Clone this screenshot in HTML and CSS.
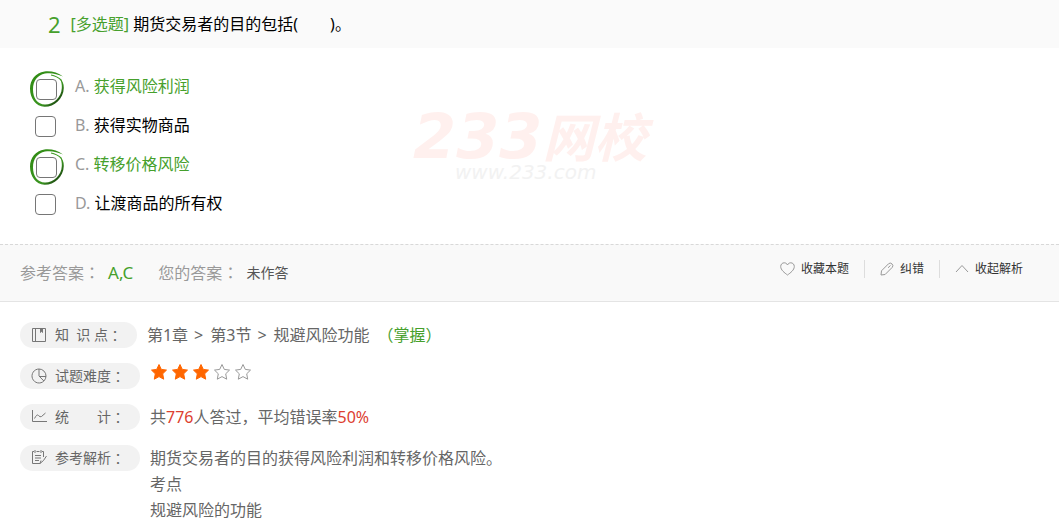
FILE: index.html
```html
<!DOCTYPE html>
<html lang="zh-CN">
<head>
<meta charset="utf-8">
<title>期货交易者的目的</title>
<link rel="stylesheet" href="styles.css">
</head>
<body>
<svg class="defs" aria-hidden="true">
  <defs>
    <linearGradient id="ink" x1="0" y1="0" x2="1" y2="1">
      <stop offset="0" stop-color="#2f8a12"/>
      <stop offset="0.65" stop-color="#3a9420"/>
      <stop offset="0.85" stop-color="#1c4a10"/>
      <stop offset="1" stop-color="#3a9420"/>
    </linearGradient>
    <symbol id="ring" viewBox="0 0 36 38">
      <path fill="url(#ink)" d="M34 6.500C29 2.500 22 .6 15.500 1.400C6.500 2.600 1 10 1 18.500C1 28.500 7 36.500 15.500 36.800C25 37 34.500 29 34.800 18C34.900 14 33.500 10.500 31 8.500C32.500 12 33 15 32.800 18C32.500 27.500 24.500 34.600 16 34.500C8.500 34.400 4 28 4 19.500C4 11 8.500 5 16 3.600C22 2.500 28 3.900 34 6.500Z"/>
      <path fill="none" stroke="#3f9a22" stroke-width="1.200" d="M22 5Q28 6 32.500 10.500"/>
    </symbol>
    <symbol id="star" viewBox="0 0 18 18">
      <path d="M9 1.500l2.300 4.900 5.200.7-3.800 3.700 1 5.400L9 13.600l-4.700 2.600 1-5.400L1.500 7.100l5.200-.7z"/>
    </symbol>
  </defs>
</svg>

<main>
  <header class="question">
    <span class="number">2</span>
    <h1 class="stem"><span class="green">[多选题]</span> 期货交易者的目的包括(&#12288;&#12288;)。</h1>
  </header>

  <section class="options">
    <ul class="choices">
      <li class="choice correct">
        <span class="tick"><input type="checkbox" id="a"><svg class="ring"><use href="#ring"/></svg></span>
        <label for="a"><span class="letter">A.</span> 获得风险利润</label>
      </li>
      <li class="choice">
        <span class="tick"><input type="checkbox" id="b"></span>
        <label for="b"><span class="letter">B.</span> 获得实物商品</label>
      </li>
      <li class="choice correct">
        <span class="tick"><input type="checkbox" id="c"><svg class="ring"><use href="#ring"/></svg></span>
        <label for="c"><span class="letter">C.</span> 转移价格风险</label>
      </li>
      <li class="choice">
        <span class="tick"><input type="checkbox" id="d"></span>
        <label for="d"><span class="letter">D.</span> 让渡商品的所有权</label>
      </li>
    </ul>
    <div class="watermark">
      <div class="brand"><span class="digits">233</span><span class="school">网校</span></div>
      <div class="site">www.233.com</div>
    </div>
  </section>

  <section class="answers">
    <div class="results">
      <span class="caption">参考答案<span class="mid" lang="zh-TW">：</span></span><span class="key">A,C</span>
      <span class="caption yours">您的答案<span class="mid" lang="zh-TW">：</span></span><span class="mine">未作答</span>
    </div>
    <div class="actions">
      <button type="button" class="action"><svg width="16" height="14" viewBox="0 0 16 14"><path d="M7.500 13C4.500 10.800.7 8 .7 4.500C.7 2.300 2.300.8 4.200.8C5.700.8 6.900 1.600 7.500 3C8.100 1.600 9.300.8 10.800.8C12.700.8 14.300 2.300 14.300 4.500C14.300 8 10.500 10.800 7.500 13Z"/></svg>收藏本题</button>
      <button type="button" class="action"><svg width="15" height="14" viewBox="0 0 15 14"><path d="M1 13L1.500 8.800L8.500 1.800Q10.200.2 12 1.900Q13.800 3.700 12.200 5.400L5.100 12.500L1 13M8 5.800L10.500 3.500"/></svg>纠错</button>
      <button type="button" class="action"><svg width="14" height="14" viewBox="0 0 14 14"><path d="M1 10L7 3.500L13 10"/></svg>收起解析</button>
    </div>
  </section>

  <section class="details">
    <div class="row">
      <h2 class="pill"><svg width="16" height="16" viewBox="0 0 16 16"><path d="M1.500 1.500H14.500V14.500H1.500ZM4.500 1.500V14.500M9.500 1.500V5.500L10.500 4.500L11.500 5.500V1.500M10.500 1.500V4.500"/></svg>知&nbsp;&nbsp;识&nbsp;点<span class="mid" lang="zh-TW">：</span></h2>
      <p class="value chapter">第1章<span class="sep">&gt;</span>第3节<span class="sep">&gt;</span>规避风险功能<span class="green level" lang="zh-TW">（掌握）</span></p>
    </div>
    <div class="row">
      <h2 class="pill"><svg width="16" height="16" viewBox="0 0 16 16"><path d="M8 1A7 7 0 1 0 12.900 13A7 7 0 0 0 15 8A7 7 0 0 0 8 1V8L12.900 13M8 8.500H15"/></svg>试题难度<span class="mid" lang="zh-TW">：</span></h2>
      <div class="stars" role="img" aria-label="3/5">
        <svg class="on"><use href="#star"/></svg><svg class="on"><use href="#star"/></svg><svg class="on"><use href="#star"/></svg><svg><use href="#star"/></svg><svg><use href="#star"/></svg>
      </div>
    </div>
    <div class="row">
      <h2 class="pill"><svg width="16" height="16" viewBox="0 0 16 16"><path d="M1.500 1V12.500H16M3.500 9.500Q6 4.500 7.500 6.500T10.500 7.500L14.500 4"/></svg>统&#12288;&#12288;计<span class="mid" lang="zh-TW">：</span></h2>
      <p class="value">共<span class="red">776</span>人答过，平均错误率<span class="red">50%</span></p>
    </div>
    <div class="row">
      <h2 class="pill"><svg width="16" height="16" viewBox="0 0 16 16"><path d="M3 1.500H1.500V13.500H9L12.500 10.500L15.500 6M11 1.500H12.500V7M4 0V3M10 0V3M5.500 1.500H8.500M4 5.500H10M4 8H10M4 10.500H8M9 13.500L10 10.500"/></svg>参考解析<span class="mid" lang="zh-TW">：</span></h2>
      <p class="value">期货交易者的目的获得风险利润和转移价格风险。<br>考点<br>规避风险的功能</p>
    </div>
  </section>
</main>
</body>
</html>
```

FILE: styles.css
```css
* {
  box-sizing: border-box;
}

body {
  margin: 0;
  background: #fff;
  color: #000;
  font: 400 16px/26px "Noto Sans", "Noto Sans CJK SC", sans-serif;
}

h1, h2, p, ul {
  margin: 0;
  padding: 0;
  font-weight: inherit;
}

.defs {
  display: block;
  width: 0;
  height: 0;
}

.green {
  color: #46a02c;
}

.red {
  color: #dd4030;
}

.mid {
  font-family: "Noto Sans CJK TC", sans-serif;
  line-height: 1;
}

.question {
  display: flex;
  align-items: center;
  gap: 10px;
  height: 48px;
  padding: 0 48px;
  background: #fafafa;
}

.number {
  color: #46a02c;
  font-size: 22px;
}

.stem {
  font-size: 16px;
}

.options {
  display: grid;
  grid-template-columns: 413px 1fr;
  padding: 20px 0;
}

.choices {
  list-style: none;
  padding-left: 35px;
}

.choice {
  display: flex;
  align-items: center;
  gap: 19px;
  height: 39px;
}

.choice label {
  padding-bottom: 3px;
}

.letter {
  color: #999;
}

.correct {
  color: #46a02c;
}

.tick {
  position: relative;
  display: flex;
}

.tick input {
  appearance: none;
  width: 21px;
  height: 21px;
  margin: 0;
  border: 1px solid #767676;
  border-radius: 4px;
  background: #fff;
}

.correct .tick {
  padding: 3px 0 0 1px;
  margin-right: -1px;
}

.ring {
  position: absolute;
  left: -6px;
  top: -6px;
  width: 36px;
  height: 38px;
  pointer-events: none;
}

.watermark {
  padding-top: 43px;
  font-style: italic;
  color: #fff0ee;
}

.brand {
  display: flex;
  align-items: center;
  height: 52px;
  font-weight: 700;
  line-height: 52px;
  white-space: nowrap;
}

.digits {
  font-family: "DejaVu Sans", sans-serif;
  font-size: 62px;
}

.school {
  padding-bottom: 4px;
  font-family: "Noto Sans CJK SC", sans-serif;
  font-size: 52px;
}

.site {
  padding-left: 42px;
  color: #f2f2f2;
  font: italic 20px/18px "DejaVu Sans", sans-serif;
}

.answers {
  display: flex;
  justify-content: space-between;
  height: 58px;
  padding: 0 36px 0 20px;
  border-top: 1px dashed #d8d8d8;
  border-bottom: 1px solid #e4e4e4;
  background: #f9f9f9;
}

.results {
  display: flex;
  align-items: center;
  gap: 8px;
}

.caption {
  color: #999;
}

.yours {
  margin-left: 17px;
}

.key {
  color: #46a02c;
  font-size: 17px;
}

.mine {
  color: #555;
  font-size: 14px;
}

.actions {
  display: flex;
  align-items: center;
  padding-bottom: 9px;
}

.action {
  display: flex;
  align-items: center;
  gap: 5px;
  height: 18px;
  padding: 0 15px;
  border: 0;
  border-right: 1px solid #ddd;
  background: none;
  color: #333;
  font: inherit;
  font-size: 12px;
  line-height: 18px;
}

.action:last-child {
  gap: 6px;
  padding-right: 0;
  border-right: 0;
}

.action svg {
  fill: none;
  stroke: #999;
}

.details {
  display: grid;
  gap: 15px;
  padding: 20px;
}

.row {
  display: flex;
  align-items: flex-start;
  gap: 10px;
}

.pill {
  display: flex;
  align-items: center;
  flex: none;
  height: 26px;
  padding: 0 15px 0 11px;
  border-radius: 13px;
  background: #f2f2f2;
  color: #666;
  font-size: 14px;
}

.pill svg {
  margin-right: 8px;
  fill: none;
  stroke: #777;
}

.value {
  color: #666;
}

.sep {
  margin: 0 7px 0 6px;
}

.level {
  margin-left: 8px;
  font-family: "Noto Sans CJK TC", sans-serif;
  line-height: 1;
}

.stars {
  display: flex;
  gap: 3px;
}

.stars svg {
  width: 18px;
  height: 18px;
  fill: #fff;
  stroke: #999;
}

.stars .on {
  fill: #f60;
  stroke: #f60;
}
```
